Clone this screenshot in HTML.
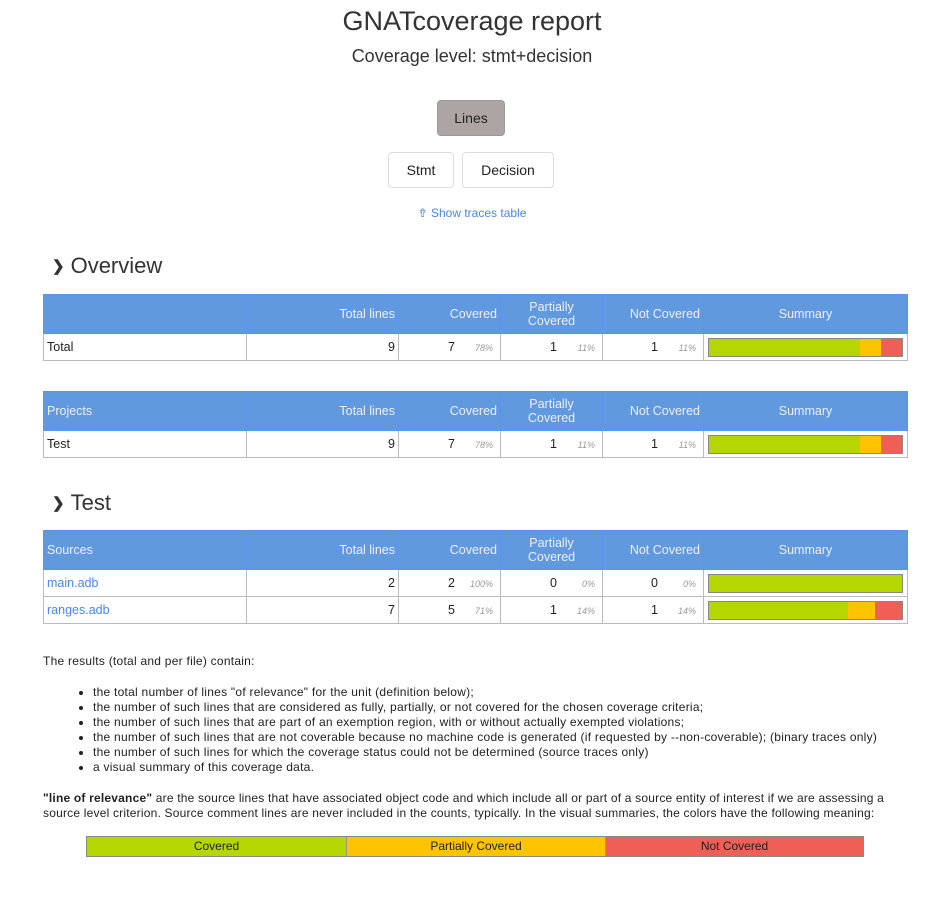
<!DOCTYPE html>
<html><head><meta charset="utf-8"><style>
body{margin:0;background:#fff;font-family:"Liberation Sans",sans-serif;color:#222;width:944px;height:911px;position:relative;overflow:hidden}
.a{position:absolute}
h1{position:absolute;top:6px;left:0;width:944px;text-align:center;margin:0;font-weight:normal;font-size:27px;color:#333}
.sub{top:46px;left:0;width:944px;text-align:center;font-size:18px;color:#333}
.btn{position:absolute;border:1px solid #ddd;border-radius:4px;font-size:14px;text-align:center;box-sizing:border-box;color:#222;background:#fff}
.h2{font-size:22px;color:#333}
.h2 b{font-size:15px;margin-right:6px;color:#333;vertical-align:2px}
table{position:absolute;left:43px;width:864px;border-collapse:collapse;table-layout:fixed;font-size:12.5px}
th{background:#6199de;color:#eef;font-weight:normal;border:1px solid #5b94ee;height:38px;padding:0 3px;line-height:14px;text-align:right}
td{border:1px solid #bbb;height:26px;padding:0 3px;text-align:right}
td:first-child,th:first-child{text-align:left}
th.c{text-align:center}
.n{display:inline-block}
.p{display:inline-block;width:42px;font-size:9px;font-style:italic;color:#999;text-align:right;padding-right:4px;box-sizing:border-box}
.bar{display:flex;height:17px;border:1px solid #888;margin:0 1px}
.g{background:#b5d600}.y{background:#ffc300}.r{background:#ee5f55}
a{color:#4a86e8;text-decoration:none}
.txt{font-size:12px;line-height:15px;color:#222;letter-spacing:0.25px}
ul{margin:0;padding-left:50px}
</style></head><body>
<h1>GNATcoverage report</h1>
<div class="a sub">Coverage level: stmt+decision</div>
<div class="btn" style="left:437px;top:100px;width:68px;height:36px;line-height:34px;background:#ada5a4;border-color:#999">Lines</div>
<div class="btn" style="left:388px;top:152px;width:66px;height:36px;line-height:34px">Stmt</div>
<div class="btn" style="left:462px;top:152px;width:92px;height:36px;line-height:34px">Decision</div>
<div class="a" style="left:0;width:944px;top:206px;text-align:center;font-size:12px"><a>⇮ Show traces table</a></div>
<div class="a h2" style="left:52px;top:253px"><b>❯</b>Overview</div>
<table style="top:294px">
<colgroup><col style="width:203px"><col style="width:152px"><col style="width:102px"><col style="width:102px"><col style="width:101px"><col style="width:204px"></colgroup>
<tr><th></th><th>Total lines</th><th>Covered</th><th class="c">Partially<br>Covered</th><th>Not Covered</th><th class="c">Summary</th></tr>
<tr><td>Total</td><td>9</td><td><span class="n">7</span><span class="p">78%</span></td><td><span class="n">1</span><span class="p">11%</span></td><td><span class="n">1</span><span class="p">11%</span></td><td><div class="bar"><div class="g" style="width:78%"></div><div class="y" style="width:11%"></div><div class="r" style="width:11%"></div></div></td></tr>
</table>
<table style="top:391px">
<colgroup><col style="width:203px"><col style="width:152px"><col style="width:102px"><col style="width:102px"><col style="width:101px"><col style="width:204px"></colgroup>
<tr><th>Projects</th><th>Total lines</th><th>Covered</th><th class="c">Partially<br>Covered</th><th>Not Covered</th><th class="c">Summary</th></tr>
<tr><td>Test</td><td>9</td><td><span class="n">7</span><span class="p">78%</span></td><td><span class="n">1</span><span class="p">11%</span></td><td><span class="n">1</span><span class="p">11%</span></td><td><div class="bar"><div class="g" style="width:78%"></div><div class="y" style="width:11%"></div><div class="r" style="width:11%"></div></div></td></tr>
</table>
<div class="a h2" style="left:52px;top:490px"><b>❯</b>Test</div>
<table style="top:530px">
<colgroup><col style="width:203px"><col style="width:152px"><col style="width:102px"><col style="width:102px"><col style="width:101px"><col style="width:204px"></colgroup>
<tr><th>Sources</th><th>Total lines</th><th>Covered</th><th class="c">Partially<br>Covered</th><th>Not Covered</th><th class="c">Summary</th></tr>
<tr><td><a>main.adb</a></td><td>2</td><td><span class="n">2</span><span class="p">100%</span></td><td><span class="n">0</span><span class="p">0%</span></td><td><span class="n">0</span><span class="p">0%</span></td><td><div class="bar"><div class="g" style="width:100%"></div></div></td></tr>
<tr><td><a>ranges.adb</a></td><td>7</td><td><span class="n">5</span><span class="p">71%</span></td><td><span class="n">1</span><span class="p">14%</span></td><td><span class="n">1</span><span class="p">14%</span></td><td><div class="bar"><div class="g" style="width:72%"></div><div class="y" style="width:14%"></div><div class="r" style="width:14%"></div></div></td></tr>
</table>
<div class="a txt" style="left:43px;top:654px">The results (total and per file) contain:</div>
<div class="a txt" style="left:43px;top:685px;width:880px"><ul>
<li>the total number of lines "of relevance" for the unit (definition below);</li>
<li>the number of such lines that are considered as fully, partially, or not covered for the chosen coverage criteria;</li>
<li>the number of such lines that are part of an exemption region, with or without actually exempted violations;</li>
<li>the number of such lines that are not coverable because no machine code is generated (if requested by --non-coverable); (binary traces only)</li>
<li>the number of such lines for which the coverage status could not be determined (source traces only)</li>
<li>a visual summary of this coverage data.</li></ul></div>
<div class="a txt" style="left:43px;top:791px;width:900px;white-space:nowrap;letter-spacing:0.2px"><b>"line of relevance"</b> are the source lines that have associated object code and which include all or part of a source entity of interest if we are assessing a<br>source level criterion. Source comment lines are never included in the counts, typically. In the visual summaries, the colors have the following meaning:</div>
<div class="a" style="left:86px;top:836px;width:776px;height:19px;border:1px solid #888;display:flex;font-size:12px;line-height:19px;text-align:center">
<div class="g" style="width:259px;border-right:1px solid #999">Covered</div><div class="y" style="width:258px;border-right:1px solid #999">Partially Covered</div><div class="r" style="flex:1">Not Covered</div></div>
</body></html>
